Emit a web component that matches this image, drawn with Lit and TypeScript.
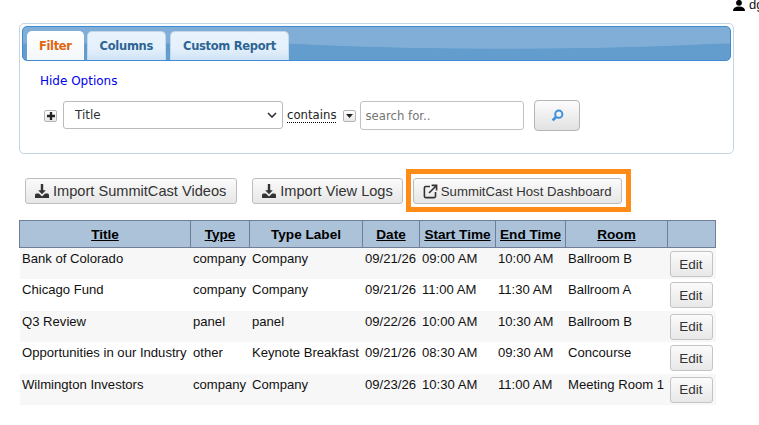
import {LitElement, css, html, svg} from 'lit';
import {customElement} from 'lit/decorators.js';

const rows = [
  ['Bank of Colorado', 'company', 'Company', '09/21/26', '09:00 AM', '10:00 AM', 'Ballroom B'],
  ['Chicago Fund', 'company', 'Company', '09/21/26', '11:00 AM', '11:30 AM', 'Ballroom A'],
  ['Q3 Review', 'panel', 'panel', '09/22/26', '10:00 AM', '10:30 AM', 'Ballroom B'],
  ['Opportunities in our Industry', 'other', 'Keynote Breakfast', '09/21/26', '08:30 AM', '09:30 AM', 'Concourse'],
  ['Wilmington Investors', 'company', 'Company', '09/23/26', '10:30 AM', '11:00 AM', 'Meeting Room 1'],
];

const downloadIcon = html`<svg class="ico" width="16" height="16" viewBox="0 0 16 16">
  <path d="M6.8 1h2.4v6.2h2.6L8 11.2 4.2 7.2h2.6z" fill="#333"/>
  <path d="M1 12.2c0-1 .8-1.6 1.7-1.6h2.2L8 13.4l3.1-2.8h2.2c.9 0 1.7.6 1.7 1.6V15H1z" fill="#333"/>
</svg>`;

const externalIcon = html`<svg class="ico" width="15" height="15" viewBox="0 0 15 15" fill="none" stroke="#333" stroke-width="1.6">
  <path d="M7 2.5H2.8a1.4 1.4 0 0 0-1.4 1.4v8.3A1.4 1.4 0 0 0 2.8 13.6h8.3a1.4 1.4 0 0 0 1.4-1.4V8"/>
  <path d="M6 9l7-7M8.6 1.4h5v5"/>
</svg>`;

@customElement('app-root')
export class AppRoot extends LitElement {
  static get styles() {
    return css`
      :host {
        display: block;
        width: 759px;
        height: 425px;
        overflow: hidden;
        background: #fff;
        font-family: "Liberation Sans", Arial, sans-serif;
        color: #111;
      }
      .user {
        display: flex;
        align-items: flex-start;
        gap: 4px;
        height: 23px;
        box-sizing: border-box;
        padding-left: 733px;
        font-size: 13px;
        line-height: 10px;
        white-space: nowrap;
      }
      .user svg { flex: none; }

      /* Filter panel */
      .panel {
        box-sizing: border-box;
        width: 715px;
        height: 131px;
        margin-left: 19px;
        padding: 2px;
        border: 1px solid #c3d6e6;
        border-radius: 5px;
        background: linear-gradient(#fbfdfd, #fff 60px);
      }
      .tabbar {
        display: flex;
        align-items: flex-end;
        gap: 3px;
        box-sizing: border-box;
        height: 35px;
        padding: 5px 0 0 4px;
        border: 1px solid #3f8ad1;
        border-radius: 5px;
        background:
          radial-gradient(ellipse 337px 22px at 68% 0, #80aed7 97%, transparent 100%),
          linear-gradient(#80aed7 0, #80aed7 16px, #639dcd 17px);
      }
      .tab {
        box-sizing: border-box;
        height: 29px;
        padding: 0 12px;
        display: flex;
        align-items: center;
        border: 1px solid #c4d9ea;
        border-bottom: 0;
        border-radius: 5px 5px 0 0;
        background: linear-gradient(#e8f3fd, #e4f0fb 60%, #cfe3f5);
        color: #2e6595;
        font: bold 11.5px "DejaVu Sans", sans-serif;
        letter-spacing: -0.3px;
      }
      .tab:last-child { margin-left: 1px; }
      .tab.on {
        padding: 0 11px;
        background: linear-gradient(#fff, #f3f7fa);
        border-color: #fff;
        color: #e0650f;
        letter-spacing: -0.35px;
      }
      .hide {
        display: block;
        margin: 13px 0 0 18px;
        color: #0000ee;
        font: 12px "DejaVu Sans", sans-serif;
      }
      .filter {
        display: flex;
        align-items: center;
        margin: 12px 0 0 22px;
      }
      .mini {
        box-sizing: border-box;
        width: 13px;
        height: 12px;
        border: 1px solid #b5b5b5;
        border-radius: 2px;
        background: linear-gradient(#fff, #e8e8e8);
        display: flex;
        align-items: center;
        justify-content: center;
      }
      .select {
        box-sizing: border-box;
        display: flex;
        align-items: center;
        justify-content: space-between;
        width: 220px;
        height: 28px;
        margin: 0 0 1px 6px;
        padding: 0 5px 0 11px;
        border: 1px solid #bbb;
        border-radius: 3px;
        background: #fff;
        color: #333;
        font: 12px "DejaVu Sans", sans-serif;
      }
      .contains {
        margin: -1px 7px 0 4px;
        border-bottom: 1px dotted #000;
        color: #222;
        font: 11.7px/14px "DejaVu Sans", sans-serif;
      }
      .search {
        box-sizing: border-box;
        width: 164px;
        height: 29px;
        margin-left: 4px;
        padding: 0 4px;
        display: flex;
        align-items: center;
        border: 1px solid #c2c2c2;
        border-radius: 3px;
        color: #757575;
        font: 11.7px "DejaVu Sans", sans-serif;
      }
      .go {
        box-sizing: border-box;
        width: 46px;
        height: 31px;
        margin-left: 10px;
        display: flex;
        align-items: center;
        justify-content: center;
        border: 1px solid #b5b5b5;
        border-radius: 4px;
        background: linear-gradient(#fcfcfc, #e2e2e2);
      }

      /* Action buttons */
      .actions {
        display: flex;
        align-items: center;
        margin: 15px 0 0 25px;
        height: 43px;
      }
      .btn {
        box-sizing: border-box;
        display: flex;
        align-items: center;
        gap: 3px;
        height: 26px;
        padding: 0 10px 0 8px;
        border: 1px solid #bdbdbd;
        border-radius: 3px;
        background: linear-gradient(#fbfbfb, #e6e6e6);
        color: #333;
        font-size: 14.6px;
        white-space: nowrap;
      }
      .btn.import { margin-right: 15px; }
      .btn.import + .btn.import { padding-left: 8px; padding-right: 9px; margin-right: 3px; }
      .btn.host { font-size: 13.2px; padding: 0 9px 0 9px; gap: 3px; }
      .highlight {
        box-sizing: border-box;
        padding: 4px 4px 4px 2px;
        border: 5px solid #ff8c16;
        height: 43px;
      }

      /* Sessions table */
      table {
        width: 696px;
        margin: 8px 0 0 19px;
        border-collapse: collapse;
        table-layout: fixed;
        font-size: 13.1px;
      }
      th {
        height: 26px;
        padding: 0;
        background: #abc2d9;
        border: 1px solid #6f7d99;
        color: #000;
        font-size: 13.6px;
        font-weight: bold;
      }
      th.sort { text-decoration: underline; }
      td {
        height: 31.5px;
        padding: 3px 2.5px 0;
        vertical-align: top;
        box-sizing: border-box;
        white-space: nowrap;
        overflow: visible;
      }
      td.action { padding: 3px 0 0 2px; }
      tr.alt td { background: #f7f7f7; }
      .edit {
        box-sizing: border-box;
        width: 43px;
        height: 26px;
        display: flex;
        align-items: center;
        justify-content: center;
        border: 1px solid #c4c4c4;
        border-radius: 3px;
        background: linear-gradient(#fbfbfb, #e8e8e8);
        color: #333;
        font-size: 13.5px;
      }
    `;
  }

  render() {
    return html`
      <div class="user">
        <svg width="12" height="11" viewBox="0 0 12 11" fill="#000">
          ${svg`<circle cx="6" cy="2.8" r="2.9"/><path d="M0 11c0-3 2-4.6 6-4.6s6 1.6 6 4.6z"/>`}
        </svg>
        <span>dg</span>
      </div>
      <div class="panel">
        <div class="tabbar">
          <div class="tab on">Filter</div>
          <div class="tab">Columns</div>
          <div class="tab">Custom Report</div>
        </div>
        <a class="hide">Hide Options</a>
        <div class="filter">
          <div class="mini">
            <svg width="8" height="8" viewBox="0 0 9 9"><path d="M3.2 0h2.6v3.2H9v2.6H5.8V9H3.2V5.8H0V3.2h3.2z" fill="#222"/></svg>
          </div>
          <div class="select">
            <span>Title</span>
            <svg width="10" height="6" viewBox="0 0 10 6" fill="none" stroke="#333" stroke-width="1.6"><path d="M1 1l4 4 4-4"/></svg>
          </div>
          <span class="contains">contains</span>
          <div class="mini">
            <svg width="7" height="4" viewBox="0 0 7 4"><path d="M0 0h7L3.5 4z" fill="#222"/></svg>
          </div>
          <div class="search">search for..</div>
          <div class="go">
            <svg width="13" height="13" viewBox="0 0 13 13" fill="none" stroke="#3f8fdc">
              <circle cx="7.8" cy="5.2" r="3.6" stroke-width="2"/>
              <path d="M5 8L1.6 11.4" stroke-width="2.6"/>
            </svg>
          </div>
        </div>
      </div>
      <div class="actions">
        <div class="btn import">${downloadIcon}Import SummitCast Videos</div>
        <div class="btn import">${downloadIcon}Import View Logs</div>
        <div class="highlight">
          <div class="btn host">${externalIcon}SummitCast Host Dashboard</div>
        </div>
      </div>
      <table>
        <colgroup>
          <col style="width:171px"><col style="width:59px"><col style="width:113px"><col style="width:57px">
          <col style="width:76px"><col style="width:70px"><col style="width:102px"><col style="width:48px">
        </colgroup>
        <thead>
          <tr>
            <th class="sort">Title</th>
            <th class="sort">Type</th>
            <th>Type Label</th>
            <th class="sort">Date</th>
            <th class="sort">Start Time</th>
            <th class="sort">End Time</th>
            <th class="sort">Room</th>
            <th></th>
          </tr>
        </thead>
        <tbody>
          ${rows.map((r, i) => html`
            <tr class=${i % 2 === 0 ? 'alt' : ''}>
              ${r.map((c) => html`<td>${c}</td>`)}
              <td class="action"><div class="edit">Edit</div></td>
            </tr>`)}
        </tbody>
      </table>
    `;
  }
}

declare global {
  interface HTMLElementTagNameMap {
    'app-root': AppRoot;
  }
}
